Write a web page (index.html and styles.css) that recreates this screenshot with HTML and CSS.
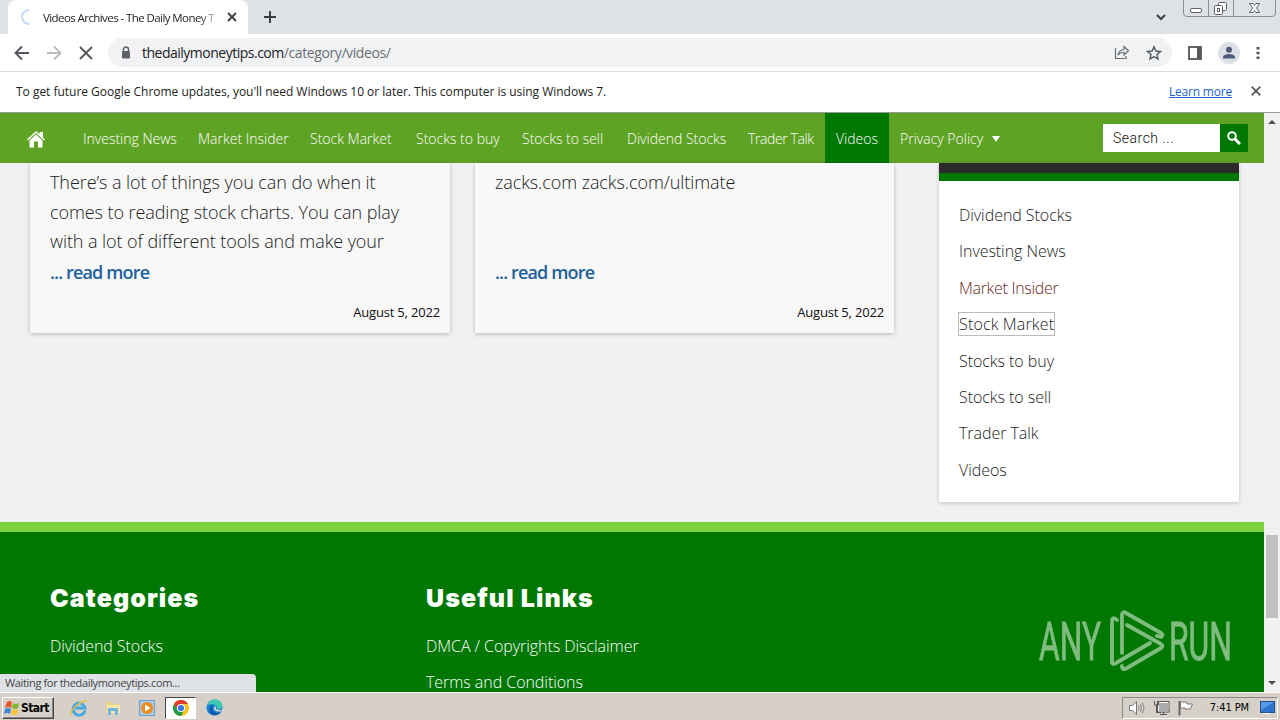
FILE: index.html
```html
<!DOCTYPE html>
<html lang="en">
<head>
    <meta charset="UTF-8">
    <meta name="viewport" content="width=device-width, initial-scale=1.0">
    <title>Videos Archives - The Daily Money Tips</title>
    <link rel="stylesheet" href="styles.css">
</head>
<body>
    <!-- Browser window -->
    <header class="tab-strip">
        <div class="tab">
            <svg class="spinner" width="16" height="16" viewBox="0 0 16 16"><path d="M9 1A7 7 0 0 0 9 15" fill="none" stroke="#c6d6f7" stroke-width="2"/></svg>
            <span class="tab-title">Videos Archives - The Daily Money T</span>
            <svg width="10" height="10" viewBox="0 0 10 10"><path d="M1 1L9 9M9 1L1 9" stroke="#3c4043" stroke-width="1.8"/></svg>
        </div>
        <svg class="new-tab" width="12" height="12" viewBox="0 0 12 12"><path d="M6 0V12M0 6H12" stroke="#3c4043" stroke-width="2"/></svg>
        <svg class="tab-search" width="10" height="7" viewBox="0 0 10 7"><path d="M1 1L5 5L9 1" fill="none" stroke="#3c4043" stroke-width="2"/></svg>
        <svg class="window-buttons" width="94" height="18" viewBox="0 0 94 18">
            <path d="M.5 0V13Q.5 16.500 4 16.500H89Q92.500 16.500 92.500 13V0M25.500 0V16M50.500 0V16" fill="none" stroke="#8b8e95"/>
            <rect x="7.500" y="8.500" width="11" height="4" rx="1.500" fill="#fff" stroke="#5f6368"/>
            <g fill="#fff" stroke="#5f6368"><rect x="35.500" y="2.500" width="8" height="8" rx="1"/><rect x="31.500" y="5.500" width="8" height="9" rx="1"/><rect x="34.500" y="8.500" width="2" height="3"/></g>
            <path d="M66.500 3.500H70L71.500 5.500L73 3.500H76.500L73.500 8L76.500 12.500H73L71.500 10.500L70 12.500H66.500L69.500 8Z" fill="#fff" stroke="#5f6368"/>
        </svg>
    </header>
    <div class="toolbar">
        <svg width="16" height="16" viewBox="0 0 16 16"><path d="M15 8H2M8 1.500L1.500 8L8 14.500" fill="none" stroke="#54585c" stroke-width="1.900"/></svg>
        <svg width="16" height="16" viewBox="0 0 16 16"><path d="M1 8H14M8 1.500L14.500 8L8 14.500" fill="none" stroke="#b9bbbe" stroke-width="1.900"/></svg>
        <svg width="16" height="16" viewBox="0 0 16 16"><path d="M2 2L14 14M14 2L2 14" stroke="#54585c" stroke-width="1.900"/></svg>
        <div class="address">
            <svg width="10" height="13" viewBox="0 0 10 13"><rect x="1" y="5" width="8" height="7.500" rx="1" fill="#5f6368"/><path d="M2.500 6V3.500A2.500 2.500 0 0 1 7.500 3.500V6" fill="none" stroke="#5f6368" stroke-width="1.500"/></svg>
            <span class="url"><b>thedailymoneytips.com</b>/category/videos/</span>
            <svg class="share" width="16" height="15" viewBox="0 0 16 15"><path d="M1.500 3V13.500H12V11" fill="none" stroke="#6b6f73" stroke-width="1.200"/><path d="M4 10Q5 5 10 4.500V1.500L14.500 5.800L10 10V7.300Q6.500 7 4 10Z" fill="none" stroke="#6b6f73" stroke-width="1.200"/></svg>
            <svg width="16" height="16" viewBox="0 0 16 16"><path d="M8 1.800L9.900 6L14.500 6.500L11 9.500L12 14L8 11.600L4 14L5 9.500L1.500 6.500L6.100 6Z" fill="none" stroke="#54585c" stroke-width="1.400"/></svg>
        </div>
        <svg class="panel" width="14" height="14" viewBox="0 0 14 14"><rect x="1" y="1" width="12" height="12" fill="none" stroke="#54585c" stroke-width="1.800"/><path d="M9 1H13V13H9Z" fill="#54585c"/></svg>
        <svg class="avatar" width="22" height="22" viewBox="0 0 22 22"><circle cx="11" cy="11" r="11" fill="#dde1e7"/><circle cx="11" cy="7.700" r="3" fill="#4d5b76"/><path d="M5 16.500V14.500Q6 12 11 12Q16 12 17 14.500V16.500Z" fill="#4d5b76"/></svg>
        <svg width="4" height="14" viewBox="0 0 4 14"><path d="M.5 1H3.500V3.500H.5ZM.5 5.700H3.500V8.300H.5ZM.5 10.500H3.500V13H.5Z" fill="#54585c"/></svg>
    </div>
    <div class="infobar">
        <span>To get future Google Chrome updates, you'll need Windows 10 or later. This computer is using Windows 7.</span>
        <a href="#">Learn more</a>
        <svg width="10" height="10" viewBox="0 0 10 10"><path d="M.7 .7L9.300 9.300M9.300 .7L.7 9.300" stroke="#54585c" stroke-width="1.800"/></svg>
    </div>

    <div class="viewport">
        <div class="page">
            <nav>
                <ul class="navbar">
                    <li><a href="#" class="home"><svg width="18" height="18" viewBox="0 0 18 18"><path d="M0 9.500L9 1L12.500 4.300V2H16V7.600L18 9.500L17 10.500L9 3L1 10.500Z" fill="#fff"/><path d="M2.500 10.500L9 4.500L15.500 10.500V17.500H11V11.500H7V17.500H2.500Z" fill="#fff"/></svg></a></li>
                    <li><a href="#">Investing News</a></li>
                    <li><a href="#">Market Insider</a></li>
                    <li><a href="#">Stock Market</a></li>
                    <li><a href="#">Stocks to buy</a></li>
                    <li><a href="#">Stocks to sell</a></li>
                    <li><a href="#">Dividend Stocks</a></li>
                    <li><a href="#" class="tight">Trader Talk</a></li>
                    <li class="current"><a href="#">Videos</a></li>
                    <li><a href="#">Privacy Policy<i class="arrow"></i></a></li>
                </ul>
                <form class="search">
                    <input type="text" placeholder="Search ...">
                    <button type="button"><svg width="14" height="14" viewBox="0 0 14 14"><circle cx="5" cy="5" r="3.800" fill="none" stroke="#fff" stroke-width="2"/><path d="M8 8L13 13" stroke="#fff" stroke-width="3"/></svg></button>
                </form>
            </nav>

            <main>
                <article class="card">
                    <p class="excerpt">There’s a lot of things you can do when it<br>comes to reading stock charts. You can play<br>with a lot of different tools and make your</p>
                    <a href="#" class="read-more">... read more</a>
                    <time>August 5, 2022</time>
                </article>
                <article class="card">
                    <p class="excerpt">zacks.com zacks.com/ultimate</p>
                    <a href="#" class="read-more">... read more</a>
                    <time>August 5, 2022</time>
                </article>
                <aside>
                    <ul class="links">
                        <li><a href="#">Dividend Stocks</a></li>
                        <li><a href="#">Investing News</a></li>
                        <li><a href="#" class="hovered">Market Insider</a></li>
                        <li><a href="#" class="focused">Stock Market</a></li>
                        <li><a href="#">Stocks to buy</a></li>
                        <li><a href="#">Stocks to sell</a></li>
                        <li><a href="#">Trader Talk</a></li>
                        <li><a href="#">Videos</a></li>
                    </ul>
                </aside>
            </main>

            <footer>
                <section>
                    <h3>Categories</h3>
                    <ul class="links">
                        <li><a href="#">Dividend Stocks</a></li>
                    </ul>
                </section>
                <section>
                    <h3>Useful Links</h3>
                    <ul class="links">
                        <li><a href="#">DMCA / Copyrights Disclaimer</a></li>
                        <li><a href="#">Terms and Conditions</a></li>
                    </ul>
                </section>
            </footer>
        </div>
        <div class="scrollbar">
            <i class="up"></i>
            <div class="thumb"></div>
            <i class="down"></i>
        </div>
        <div class="status">Waiting for thedailymoneytips.com...</div>
        <svg class="watermark" width="194" height="62" viewBox="0 0 194 62">
            <text x="1" y="50" textLength="62" lengthAdjust="spacingAndGlyphs">ANY</text>
            <text x="131" y="50" textLength="63" lengthAdjust="spacingAndGlyphs">RUN</text>
            <g fill="none" stroke="#fff" stroke-width="3.800" stroke-linejoin="round" stroke-linecap="round">
                <path d="M84 43V4Q85 1 88 3L123 23Q126 25 123 27L119 26"/>
                <path d="M79 10Q74 6 74 11V53Q75 55 78 53L112 33"/>
                <path d="M89 15L123 34Q126 36 123 38L89 58Q84 61 84 56"/>
            </g>
        </svg>
    </div>

    <!-- Windows taskbar -->
    <div class="taskbar">
        <button class="start">
            <svg width="16" height="16" viewBox="0 0 16 16"><path d="M3 2Q5 0 8 2L7 8Q4 6 1 8Z" fill="#e8572a"/><path d="M9 3Q12 5 15 3L14 8Q11 10 8 8Z" fill="#7db72f"/><path d="M1 9Q4 7 7 9L6 14Q3 12 0 14Z" fill="#3f86d8"/><path d="M8 9Q11 11 14 9L13 14Q10 16 7 14Z" fill="#f8c32c"/></svg>
            Start
        </button>
        <div class="apps">
            <span><svg width="18" height="18" viewBox="0 0 18 18"><path d="M15 11.500A6 6 0 1 1 15 9H5" fill="none" stroke="#45a9e2" stroke-width="2.800"/><path d="M1.500 16Q-1 13 7 6Q16 0 16.500 3" fill="none" stroke="#e9bd45" stroke-width="1.500"/></svg></span>
            <span><svg width="18" height="18" viewBox="0 0 18 18"><path d="M2 3H7L8 5H15V14H2Z" fill="#edd47f"/><path d="M3 6H16V14H3Z" fill="#f8e9aa"/><path d="M4 16V10Q4 9 5 9H13Q14 9 14 10V16H11V12H7V16Z" fill="#70b4df"/></svg></span>
            <span><svg width="18" height="18" viewBox="0 0 18 18"><rect x="1.500" y="1.500" width="15" height="15" fill="#a8c9e7" stroke="#6d9dca"/><circle cx="9" cy="9" r="6" fill="#ef8b1b"/><path d="M7 5.500L12.500 9L7 12.500Z" fill="#fff"/></svg></span>
            <span class="active"><svg width="16" height="16" viewBox="0 0 16 16"><circle cx="8" cy="8" r="8" fill="#fbc116"/><path d="M1.070 4A8 8 0 0 1 14.930 4H8L4.540 10Z" fill="#e33b2e"/><path d="M1.070 4A8 8 0 0 0 8 16L11.460 10H4.540Z" fill="#229a4c"/><circle cx="8" cy="8" r="4" fill="#fff"/><circle cx="8" cy="8" r="3.100" fill="#3577e5"/></svg></span>
            <span><svg width="17" height="17" viewBox="0 0 17 17"><circle cx="8.500" cy="8.500" r="8" fill="#1680d2"/><path d="M1 7Q3 0 9 .5Q16 1 16.500 7Q16 11 11 10.500Q12 7 8 5.500Q4 4 1 7Z" fill="#3ec8b1"/><path d="M8 6Q4 10 8 13Q12 15.500 15.500 12Q12 17 7 16Q2 13 4 8Z" fill="#0d57a6"/><path d="M8.500 7Q10 7 10 9Q9 11 16 11L15 12.500Q9 13 8 10Z" fill="#d5d1cc"/></svg></span>
        </div>
        <div class="tray">
            <svg width="18" height="16" viewBox="0 0 18 16"><path d="M1.500 5.500H4.500L8.500 1.500V14.500L4.500 10.500H1.500Z" fill="#fff" stroke="#777"/><path d="M10.500 5.500Q12 8 10.500 10.500M12.500 4Q14.500 8 12.500 12M14.500 2.500Q17.500 8 14.500 13.500" fill="none" stroke="#888"/></svg>
            <svg width="17" height="16" viewBox="0 0 17 16"><rect x="5.500" y="2.500" width="10" height="9" fill="#aaa" stroke="#fff"/><rect x="4.500" y="1.500" width="11.500" height="10.500" fill="none" stroke="#555"/><path d="M1.500 1V5H5.500V1M3.500 5V12.500H8M7 14.500H14M10.500 12V14" fill="none" stroke="#555"/></svg>
            <svg width="17" height="16" viewBox="0 0 17 16"><path d="M2.500 1V15.500" stroke="#666" stroke-width="2"/><path d="M3.500 2H9.500L10 4H15.500L13.500 9H8.500L8 8H3.500Z" fill="#fff" stroke="#777"/></svg>
            <span class="clock">7:41 PM</span>
            <svg width="15" height="14" viewBox="0 0 15 14"><rect x=".5" y=".5" width="14" height="11" fill="#2f74cf" stroke="#234f91"/><path d="M1 1H14L1 9Z" fill="#5b9be6"/><path d="M3 12.500H10" stroke="#fff"/></svg>
        </div>
    </div>
</body>
</html>
```
FILE: styles.css
```css
:root {
    --green: #5fa325;
    --green-dark: #007700;
    --green-light: #7dd33c;
    --background: #f1f1f1;
    --text: #222;
    --chrome: #dee1e6;
    --taskbar: #d6d0c8;
}

* {
    margin: 0;
    padding: 0;
    box-sizing: border-box;
}

body {
    display: flex;
    flex-direction: column;
    height: 720px;
    overflow: hidden;
    font-family: "Open Sans", sans-serif;
    color: var(--text);
    background: #fff;
}

svg {
    display: block;
    flex: none;
}

a {
    color: inherit;
    text-decoration: none;
}

ul {
    list-style: none;
}

/* Browser */
.tab-strip {
    display: flex;
    flex: none;
    height: 34px;
    padding-left: 8px;
    background: var(--chrome);
}

.tab {
    display: flex;
    align-items: center;
    width: 240px;
    padding: 0 11px 0 12px;
    background: #fff;
    border-radius: 8px 8px 0 0;
    font-size: 11.500px;
    letter-spacing: -0.580px;
}

.tab-title {
    width: 174px;
    margin: 0 10px 0 7px;
    white-space: nowrap;
    mask-image: linear-gradient(to right, #000 155px, transparent 180px);
}

.new-tab {
    margin: 11px 0 0 16px;
}

.tab-search {
    margin: 14px 17px 0 auto;
}

.window-buttons {
    margin-right: 3px;
}

.toolbar {
    display: flex;
    flex: none;
    align-items: center;
    gap: 16px;
    height: 38px;
    padding: 0 20px 0 14px;
    border-bottom: 1px solid #dadce0;
}

.address {
    display: flex;
    flex: 1;
    align-items: center;
    height: 29px;
    margin-left: -2px;
    padding: 0 10px 0 13px;
    border-radius: 15px;
    background: #f0f2f4;
    font-size: 14px;
    letter-spacing: -0.400px;
    color: #6b6f73;
}

.url {
    margin-left: 11px;
}

.url b {
    font-weight: 400;
    letter-spacing: -0.500px;
    color: #202124;
}

.share {
    margin: 0 16px 0 auto;
}

.infobar {
    display: flex;
    flex: none;
    align-items: center;
    height: 41px;
    padding: 0 19px 2px 16px;
    border-bottom: 1px solid #999;
    font-size: 12px;
    letter-spacing: -0.020px;
}

.infobar a {
    margin: 0 19px 0 auto;
    color: #1a64d0;
    letter-spacing: -0.200px;
    text-decoration: underline;
}

/* Web page */
.viewport {
    position: relative;
    display: flex;
    flex: none;
    height: 579px;
}

.page {
    width: 1264px;
    overflow: hidden;
    background: var(--background);
    font-weight: 300;
}

nav {
    display: flex;
    align-items: center;
    justify-content: space-between;
    height: 50px;
    padding-right: 16px;
    background: var(--green);
    color: #fff;
}

.navbar {
    display: grid;
    grid-template-columns: 72px 115px 112px 106px 106px 105px 121px 88px 64px 130px;
    font-size: 14px;
    line-height: 50px;
}

.navbar a {
    display: block;
    height: 50px;
    padding: 1px 0 0 11px;
    white-space: nowrap;
}

.navbar .home {
    padding: 17px 0 0 27px;
}

.navbar .tight {
    letter-spacing: -0.400px;
}

.navbar .current {
    background: var(--green-dark);
}

.arrow {
    display: inline-block;
    margin-left: 9px;
    border: 4px solid transparent;
    border-top: 6px solid #fff;
    border-bottom: 0;
    vertical-align: 2px;
}

.search {
    display: flex;
}

.search input {
    width: 117px;
    height: 28px;
    padding: 0 10px;
    border: none;
    font: 300 14px Roboto, sans-serif;
    letter-spacing: 0.5px;
}

.search input::placeholder {
    color: #111;
}

.search button {
    width: 28px;
    padding-left: 7px;
    border: none;
    background: var(--green-dark);
}

main {
    display: flex;
    align-items: flex-start;
    height: 359px;
    padding-left: 30px;
}

.card {
    display: flex;
    flex-direction: column;
    width: 420px;
    height: 170px;
    margin-right: 25px;
    padding: 5px 10px 0 20px;
    background: #f8f8f8;
    box-shadow: 0 1px 4px rgba(0, 0, 0, 0.25);
}

.card + .card {
    width: 419px;
    margin-right: 45px;
}

.excerpt {
    height: 89px;
    font-size: 18px;
    letter-spacing: -0.080px;
    line-height: 29.500px;
    white-space: nowrap;
}

.read-more {
    font-size: 18px;
    font-weight: 600;
    letter-spacing: -0.850px;
    line-height: 30px;
    color: #21619c;
}

time {
    align-self: flex-end;
    margin-top: 16px;
    font-size: 13px;
    font-weight: 400;
    letter-spacing: -0.180px;
    line-height: 18px;
    color: #111;
}

aside {
    width: 300px;
    height: 339px;
    padding: 16px 20px;
    border-top: 10px solid #2d2a2b;
    background: linear-gradient(var(--green-dark) 8px, #fff 8px);
    box-shadow: 0 1px 4px rgba(0, 0, 0, 0.2);
}

aside .links {
    padding-top: 8px;
}

.links li {
    height: 36.400px;
    font-size: 16px;
    letter-spacing: -0.050px;
    line-height: 36px;
}

.hovered {
    color: #6b1f22;
    letter-spacing: -0.300px;
}

.focused {
    outline: 1px solid #bbb;
    letter-spacing: 0.150px;
}

footer {
    display: flex;
    height: 170px;
    padding: 51px 50px 0;
    border-top: 10px solid var(--green-light);
    background: var(--green-dark);
    color: #fff;
}

footer section {
    width: 376px;
}

h3 {
    height: 45px;
    font-family: Inter, sans-serif;
    font-size: 25px;
    font-weight: 900;
    letter-spacing: 1.100px;
    line-height: 30px;
}

.scrollbar {
    display: flex;
    flex-direction: column;
    align-items: center;
    width: 16px;
    padding: 7px 0;
    background: #f1f1f1;
}

.scrollbar i {
    border: 4px solid transparent;
}

.scrollbar .up {
    border-top: 0;
    border-bottom-color: #505050;
}

.scrollbar .down {
    border-bottom: 0;
    border-top-color: #505050;
}

.thumb {
    width: 12px;
    height: 83px;
    margin: 411px 0 auto;
    background: #c1c1c1;
}

.status {
    position: absolute;
    left: 0;
    bottom: 0;
    width: 256px;
    height: 18px;
    padding-left: 5px;
    border-radius: 0 4px 0 0;
    background: var(--chrome);
    font-size: 11px;
    letter-spacing: -0.350px;
    line-height: 18px;
    color: #444;
}

.watermark {
    position: absolute;
    left: 1038px;
    top: 497px;
    overflow: visible;
    opacity: 0.5;
}

.watermark text {
    fill: #fff;
    stroke: #fff;
    stroke-width: 0.8px;
    font: 400 53px Roboto, sans-serif;
}

/* Taskbar */
.taskbar {
    display: flex;
    flex: none;
    align-items: center;
    height: 28px;
    padding: 2px 2px 0;
    border-top: 1px solid #fff;
    background: var(--taskbar);
    font-family: "DejaVu Sans Condensed", sans-serif;
    font-size: 11px;
}

.start {
    display: flex;
    align-items: center;
    gap: 1px;
    width: 52px;
    height: 22px;
    padding-left: 1px;
    border: 1px solid;
    border-color: #fff #444 #444 #fff;
    box-shadow: inset -1px -1px #888;
    background: var(--taskbar);
    font: bold 12px "DejaVu Sans Condensed", sans-serif;
    letter-spacing: -0.600px;
}

.apps {
    display: flex;
    margin-left: 8px;
}

.apps span {
    display: flex;
    align-items: center;
    justify-content: center;
    width: 34px;
    height: 22px;
}

.apps .active {
    width: 31px;
    margin: 0 1px;
    border: 1px solid;
    border-color: #444 #fff #fff #444;
    background: #fff;
}

.tray {
    display: flex;
    align-items: center;
    gap: 7px;
    height: 22px;
    margin-left: auto;
    padding: 0 2px 0 5px;
    border: 1px solid;
    border-color: #888 #fff #fff #888;
}

.clock {
    margin: 0 4px 0 9px;
    color: #000;
    letter-spacing: -0.100px;
}
```
